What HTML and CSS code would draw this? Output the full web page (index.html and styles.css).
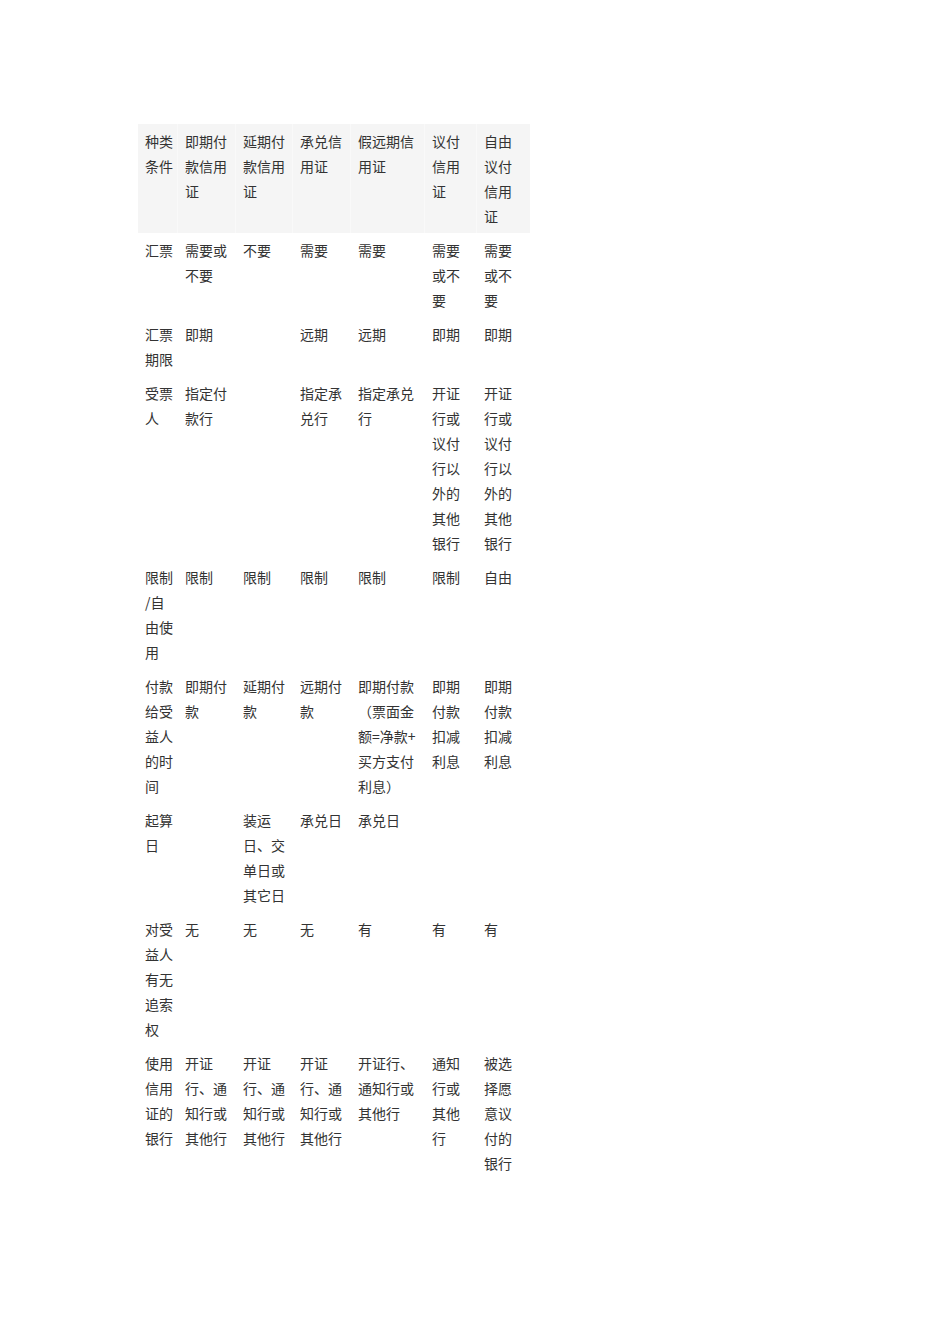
FILE: index.html
```html
<!DOCTYPE html>
<html lang="zh-CN">
<head>
<meta charset="utf-8">
<title>信用证种类比较</title>
<link rel="stylesheet" href="styles.css">
</head>
<body>
<div class="page">
<table class="lc-table">
<colgroup>
<col class="c1"><col class="c2"><col class="c3"><col class="c4"><col class="c5"><col class="c6"><col class="c7">
</colgroup>
<thead>
<tr>
<th>种类条件</th>
<th>即期付款信用证</th>
<th>延期付款信用证</th>
<th>承兑信用证</th>
<th class="wide">假远期信用证</th>
<th>议付信用证</th>
<th>自由议付信用证</th>
</tr>
</thead>
<tbody>
<tr>
<td>汇票</td><td>需要或不要</td><td>不要</td><td>需要</td><td class="wide">需要</td><td>需要或不要</td><td>需要或不要</td>
</tr>
<tr>
<td>汇票期限</td><td>即期</td><td></td><td>远期</td><td class="wide">远期</td><td>即期</td><td>即期</td>
</tr>
<tr>
<td>受票人</td><td>指定付款行</td><td></td><td>指定承兑行</td><td class="wide">指定承兑行</td><td>开证行或议付行以外的其他银行</td><td>开证行或议付行以外的其他银行</td>
</tr>
<tr>
<td>限制<br>/自由使用</td><td>限制</td><td>限制</td><td>限制</td><td class="wide">限制</td><td>限制</td><td>自由</td>
</tr>
<tr>
<td>付款给受益人的时间</td><td>即期付款</td><td>延期付款</td><td>远期付款</td><td class="wide">即期付款（票面金额=净款+<wbr>买方支付利息）</td><td>即期付款扣减利息</td><td>即期付款扣减利息</td>
</tr>
<tr>
<td>起算日</td><td></td><td>装运日、交单日或其它日</td><td>承兑日</td><td class="wide">承兑日</td><td></td><td></td>
</tr>
<tr>
<td>对受益人有无追索权</td><td>无</td><td>无</td><td>无</td><td class="wide">有</td><td>有</td><td>有</td>
</tr>
<tr>
<td>使用信用证的银行</td><td>开证行、通知行或其他行</td><td>开证行、通知行或其他行</td><td>开证行、通知行或其他行</td><td class="wide">开证行、通知行或其他行</td><td>通知行或其他行</td><td>被选择愿意议付的银行</td>
</tr>
</tbody>
</table>
</div>
</body>
</html>
```
FILE: styles.css
```css
html, body {
  margin: 0;
  padding: 0;
  background: #ffffff;
}
.page {
  padding: 124px 0 0 138px;
}
.lc-table {
  border-collapse: collapse;
  border-spacing: 0;
  table-layout: fixed;
  width: 392px;
  font-family: "Noto Sans CJK SC", "Noto Sans", sans-serif;
  font-size: 14px;
  line-height: 25px;
  color: #333333;
}
.c1 { width: 40px; }
.c2 { width: 58px; }
.c3 { width: 57px; }
.c4 { width: 58px; }
.c5 { width: 74px; }
.c6 { width: 52px; }
.c7 { width: 53px; }
.lc-table th,
.lc-table td {
  text-align: left;
  vertical-align: top;
  font-weight: normal;
  padding: 4.5px 7px 4.5px 7px;
  word-break: normal;
}
.lc-table th:first-child,
.lc-table td:first-child {
  padding-right: 5px;
}
.lc-table th.wide,
.lc-table td.wide {
  padding-right: 3px;
}
.lc-table thead th {
  background: #f5f5f5;
  box-shadow: inset -1px 0 0 #f9f9f9;
}
.lc-table thead th:last-child {
  box-shadow: none;
}
```
